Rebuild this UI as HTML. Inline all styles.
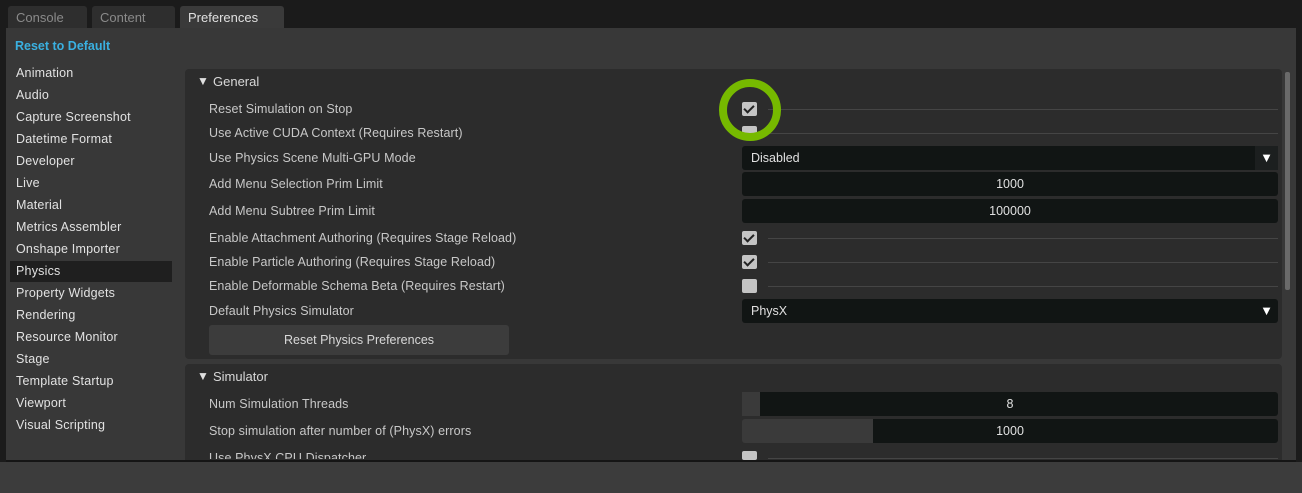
<!DOCTYPE html><html><head><style>
*{margin:0;padding:0;box-sizing:border-box}
body{width:1302px;height:493px;background:#1b1b1b;position:relative;overflow:hidden;font-family:"Liberation Sans",sans-serif;font-size:12.5px;color:#cfcfcf}
.a{position:absolute}
.tab{position:absolute;top:6px;height:22px;background:#2e2e2e;color:#8a8a8a;padding:4px 0 0 8px;border-radius:3px 3px 0 0;font-size:13px}
.side{position:absolute;left:16px;color:#e2e2e2;font-size:12.5px;letter-spacing:0.2px}
.lbl{position:absolute;left:209px;color:#c8c8c8;letter-spacing:0.1px}
.cb{position:absolute;left:742px;width:15px;height:14px;background:#c4c4c4;border-radius:2px}
.cb.k::after{content:"";position:absolute;left:4px;top:1px;width:4px;height:8px;border:solid #222;border-width:0 2px 2px 0;transform:rotate(45deg)}
.ln{position:absolute;left:768px;width:510px;height:1px;background:#454545}
.fld{position:absolute;left:742px;width:536px;height:24px;background:#111514;border-radius:3px;text-align:center;line-height:24px;color:#e0e0e0}
.tri{position:absolute;left:197px;font-size:12px;color:#e0e0e0}
</style></head><body>
<div class="tab" style="left:8px;width:79px">Console</div>
<div class="tab" style="left:92px;width:83px">Content</div>
<div class="tab" style="left:180px;width:104px;background:#3a3a3a;color:#e0e0e0">Preferences</div>
<div class="a" style="left:6px;top:28px;width:1290px;height:432px;background:#383838"></div>
<div class="a" style="left:0;top:462px;width:1302px;height:31px;background:#3c3c3c"></div>
<div class="a" style="left:15px;top:39px;color:#3ab0e0;font-size:12.5px;font-weight:bold">Reset to Default</div>
<div class="a" style="left:10px;top:261px;width:162px;height:21px;background:#1f1f1f"></div>
<div class="side" style="top:66px">Animation</div>
<div class="side" style="top:88px">Audio</div>
<div class="side" style="top:110px">Capture Screenshot</div>
<div class="side" style="top:132px">Datetime Format</div>
<div class="side" style="top:154px">Developer</div>
<div class="side" style="top:176px">Live</div>
<div class="side" style="top:198px">Material</div>
<div class="side" style="top:220px">Metrics Assembler</div>
<div class="side" style="top:242px">Onshape Importer</div>
<div class="side" style="top:264px">Physics</div>
<div class="side" style="top:286px">Property Widgets</div>
<div class="side" style="top:308px">Rendering</div>
<div class="side" style="top:330px">Resource Monitor</div>
<div class="side" style="top:352px">Stage</div>
<div class="side" style="top:374px">Template Startup</div>
<div class="side" style="top:396px">Viewport</div>
<div class="side" style="top:418px">Visual Scripting</div>

<div class="a" style="left:185px;top:69px;width:1097px;height:290px;background:#2c2c2c;border-radius:4px"></div>
<div class="a" style="left:185px;top:364px;width:1097px;height:96px;background:#2c2c2c;border-radius:4px 4px 0 0"></div>
<div class="a" style="left:1285px;top:72px;width:5px;height:218px;background:#6a6a6a;border-radius:2px"></div>
<div class="tri" style="top:74px">▼</div><div class="a" style="left:213px;top:74px;font-size:13px;color:#d8d8d8">General</div>
<div class="tri" style="top:369px">▼</div><div class="a" style="left:213px;top:369px;font-size:13px;color:#d8d8d8">Simulator</div>

<div class="lbl" style="top:102px">Reset Simulation on Stop</div>
<div class="lbl" style="top:126px">Use Active CUDA Context (Requires Restart)</div>
<div class="lbl" style="top:151px">Use Physics Scene Multi-GPU Mode</div>
<div class="lbl" style="top:177px">Add Menu Selection Prim Limit</div>
<div class="lbl" style="top:204px">Add Menu Subtree Prim Limit</div>
<div class="lbl" style="top:231px">Enable Attachment Authoring (Requires Stage Reload)</div>
<div class="lbl" style="top:255px">Enable Particle Authoring (Requires Stage Reload)</div>
<div class="lbl" style="top:279px">Enable Deformable Schema Beta (Requires Restart)</div>
<div class="lbl" style="top:304px">Default Physics Simulator</div>
<div class="lbl" style="top:397px">Num Simulation Threads</div>
<div class="lbl" style="top:424px">Stop simulation after number of (PhysX) errors</div>
<div class="lbl" style="top:451px;height:8px;overflow:hidden">Use PhysX CPU Dispatcher</div>

<div class="cb k" style="top:102px"></div><div class="ln" style="top:109px"></div>
<div class="cb" style="top:126px;height:8px"></div><div class="ln" style="top:133px"></div>
<div class="fld" style="top:146px;text-align:left;padding-left:9px">Disabled<div class="a" style="right:0;top:0;width:23px;height:24px;background:#1c1f1f;color:#fff;text-align:center;font-size:13px">▼</div></div>
<div class="fld" style="top:172px">1000</div>
<div class="fld" style="top:199px">100000</div>
<div class="cb k" style="top:231px"></div><div class="ln" style="top:238px"></div>
<div class="cb k" style="top:255px"></div><div class="ln" style="top:262px"></div>
<div class="cb" style="top:279px"></div><div class="ln" style="top:286px"></div>
<div class="fld" style="top:299px;text-align:left;padding-left:9px">PhysX<div class="a" style="right:0;top:0;width:23px;height:24px;color:#fff;text-align:center;font-size:13px">▼</div></div>
<div class="a" style="left:209px;top:325px;width:300px;height:30px;background:#3c3c3c;border-radius:3px;text-align:center;line-height:30px;color:#d8d8d8">Reset Physics Preferences</div>
<div class="fld" style="top:392px">8<div class="a" style="left:0;top:0;width:18px;height:24px;background:#3a3a3a"></div></div>
<div class="fld" style="top:419px;background:linear-gradient(90deg,#3a3a3a 131px,#111514 131px)">1000</div>
<div class="cb" style="top:451px;height:9px"></div><div class="ln" style="top:458px"></div>
<div class="a" style="left:6px;top:460px;width:1290px;height:2px;background:#151515"></div>
<svg class="a" style="left:716px;top:76px" width="68" height="68"><ellipse cx="34" cy="34" rx="27" ry="27" fill="none" stroke="#76b900" stroke-width="8"/></svg>
</body></html>
